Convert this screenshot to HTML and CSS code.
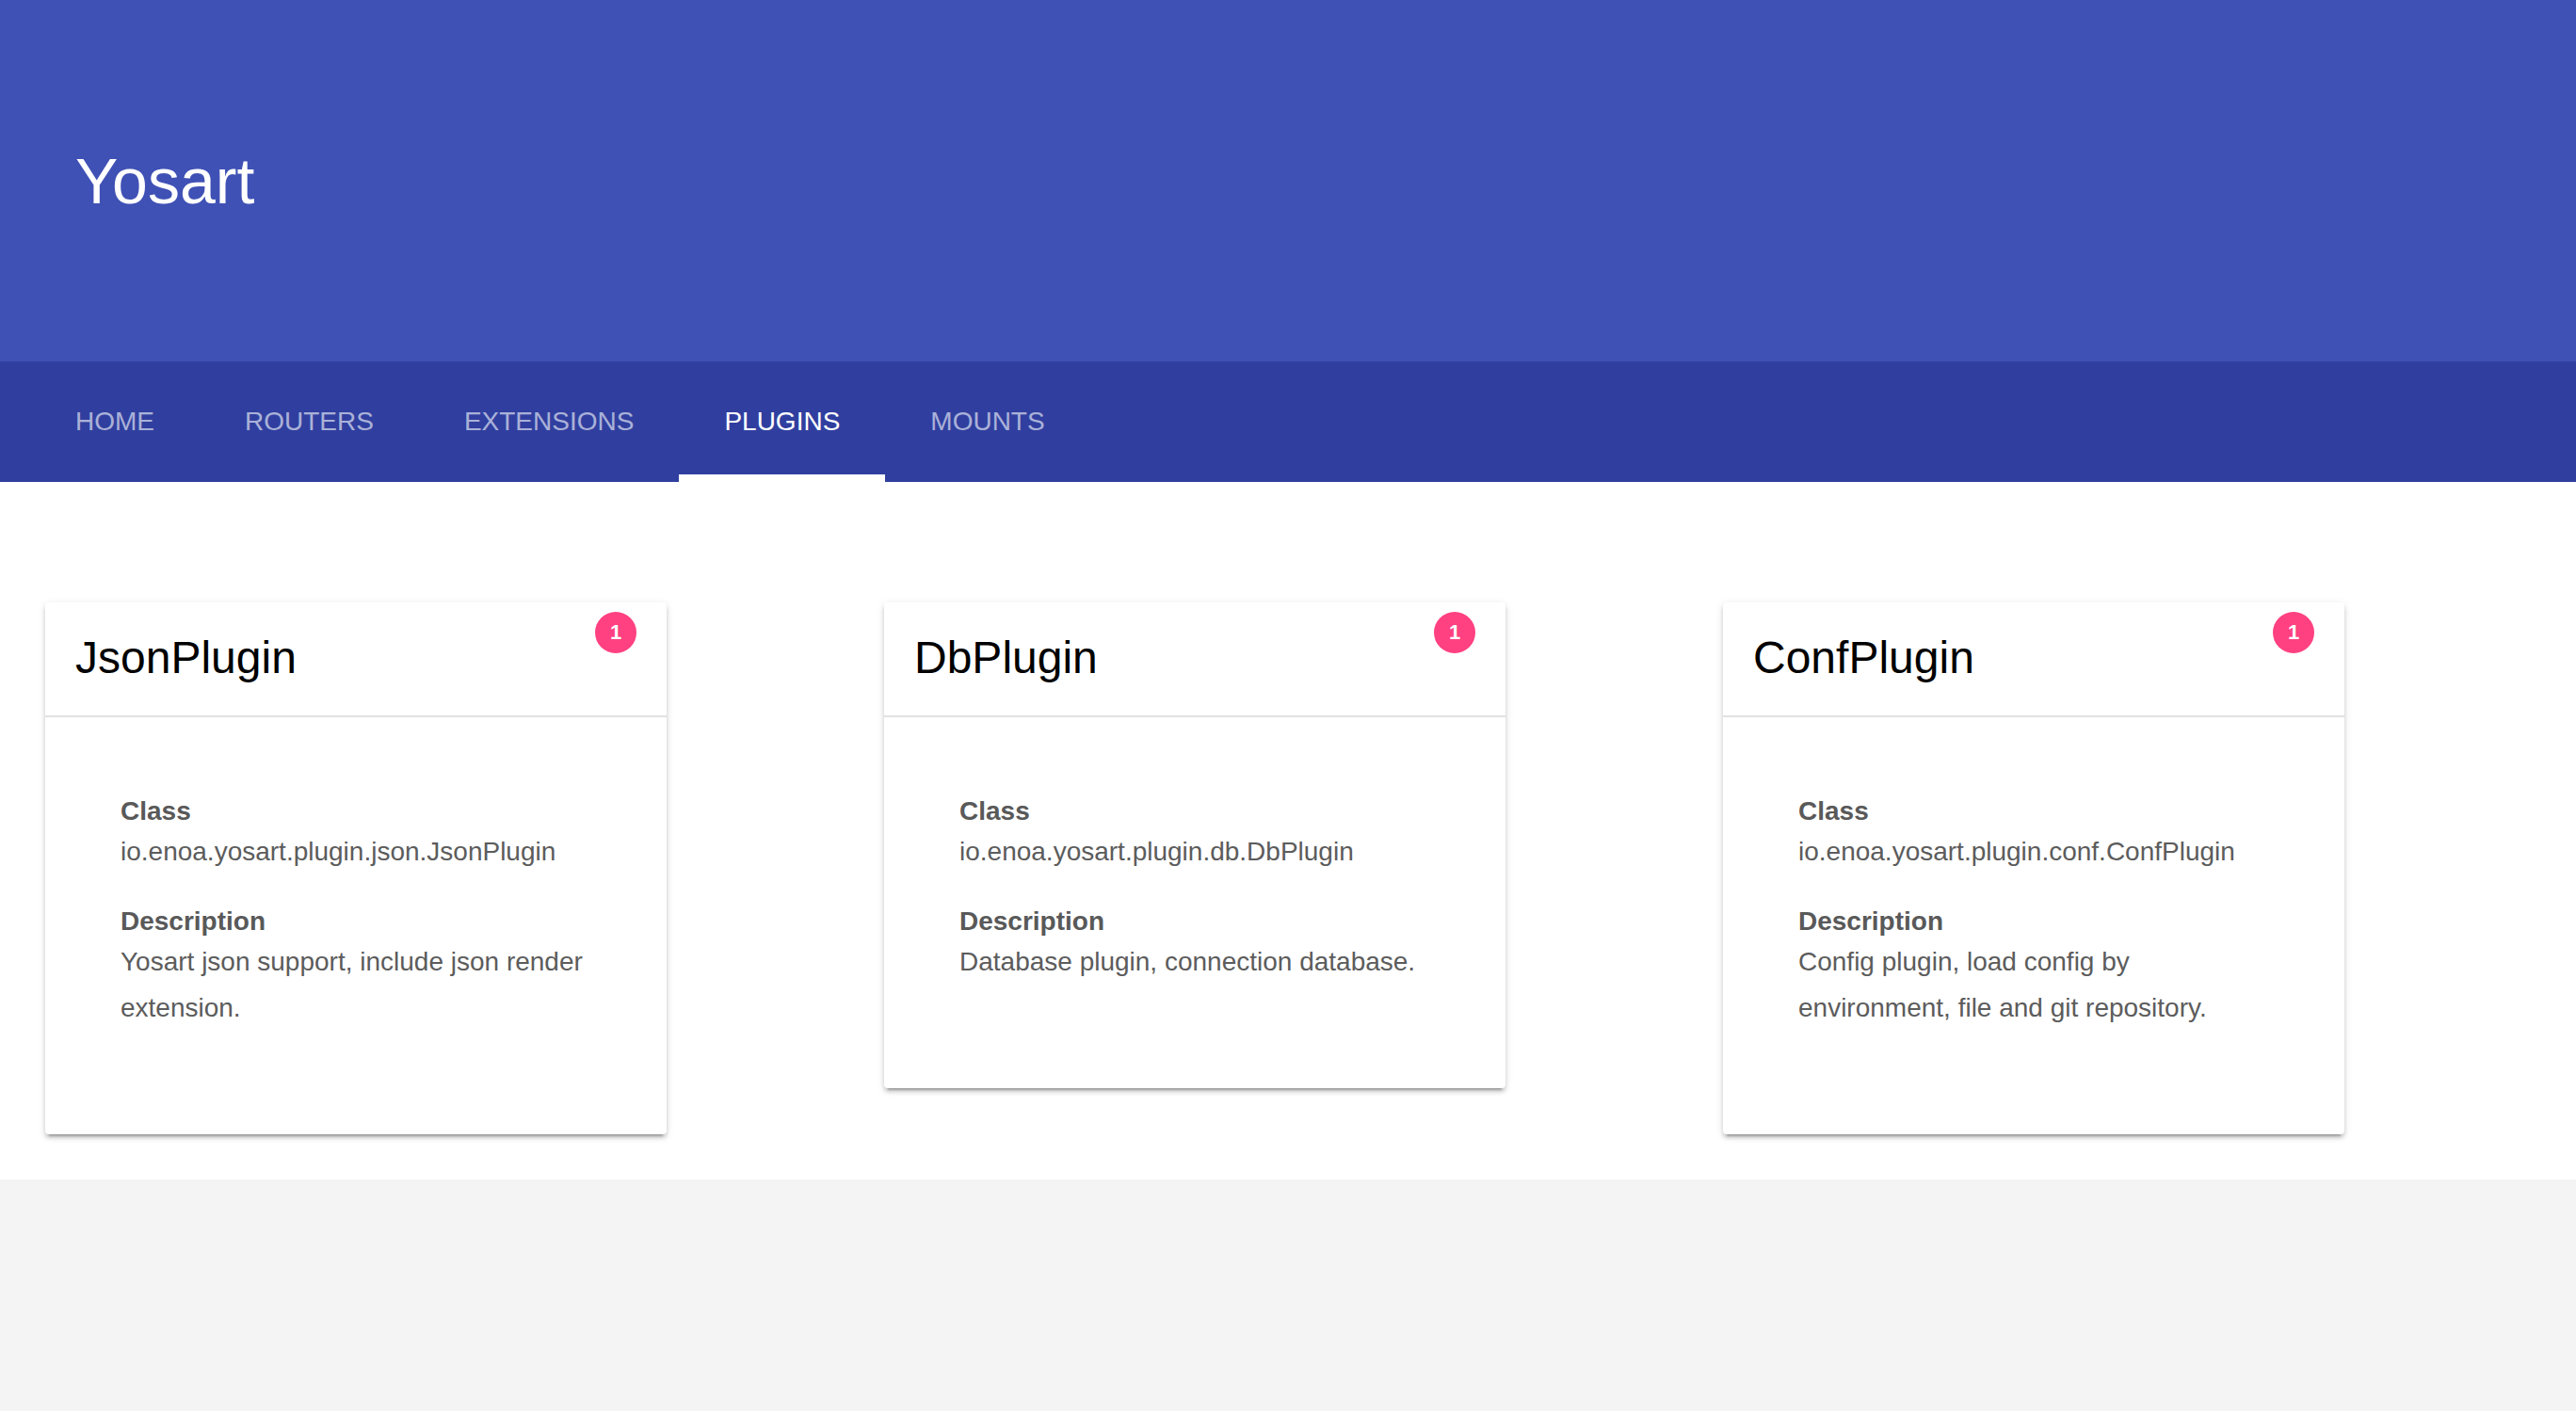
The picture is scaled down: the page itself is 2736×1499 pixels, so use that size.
FILE: index.html
```html
<!DOCTYPE html>
<html lang="en">
<head>
<meta charset="utf-8">
<title>Yosart</title>
<link rel="stylesheet" href="styles.css">
</head>
<body>
<header class="appbar">
  <div class="brand">Yosart</div>
</header>
<nav class="tabs">
  <a class="tab">HOME</a>
  <a class="tab">ROUTERS</a>
  <a class="tab">EXTENSIONS</a>
  <a class="tab active">PLUGINS</a>
  <a class="tab">MOUNTS</a>
</nav>
<main class="content">
  <section class="card">
    <div class="card-head">
      <h2 class="card-title">JsonPlugin</h2>
      <span class="badge">1</span>
    </div>
    <div class="card-body">
      <div class="field">
        <div class="label">Class</div>
        <div class="value">io.enoa.yosart.plugin.json.JsonPlugin</div>
      </div>
      <div class="field">
        <div class="label">Description</div>
        <div class="value">Yosart json support, include json render extension.</div>
      </div>
    </div>
  </section>
  <section class="card">
    <div class="card-head">
      <h2 class="card-title">DbPlugin</h2>
      <span class="badge">1</span>
    </div>
    <div class="card-body">
      <div class="field">
        <div class="label">Class</div>
        <div class="value">io.enoa.yosart.plugin.db.DbPlugin</div>
      </div>
      <div class="field">
        <div class="label">Description</div>
        <div class="value">Database plugin, connection database.</div>
      </div>
    </div>
  </section>
  <section class="card">
    <div class="card-head">
      <h2 class="card-title">ConfPlugin</h2>
      <span class="badge">1</span>
    </div>
    <div class="card-body">
      <div class="field">
        <div class="label">Class</div>
        <div class="value">io.enoa.yosart.plugin.conf.ConfPlugin</div>
      </div>
      <div class="field">
        <div class="label">Description</div>
        <div class="value">Config plugin, load config by environment, file and git repository.</div>
      </div>
    </div>
  </section>
</main>
</body>
</html>
```
FILE: styles.css
```css
html, body {
  margin: 0;
  padding: 0;
}
body {
  background: #f4f4f4;
  font-family: "Liberation Sans", Arial, sans-serif;
}
.appbar {
  height: 384px;
  background: #3f51b5;
  display: flex;
  align-items: center;
  padding-left: 80px;
}
.brand {
  color: #ffffff;
  font-size: 68px;
}
.tabs {
  height: 128px;
  background: #303f9f;
  display: flex;
  padding-left: 32px;
}
.tab {
  display: flex;
  align-items: center;
  padding: 0 48px;
  font-size: 28px;
  color: rgba(255, 255, 255, 0.6);
  box-sizing: border-box;
  border-bottom: 8px solid transparent;
  padding-top: 8px;
}
.tab.active {
  color: #ffffff;
  border-bottom-color: #ffffff;
}
.content {
  background: #ffffff;
  display: flex;
  align-items: flex-start;
  gap: 231px;
  padding: 128px 48px 48px 48px;
}
.card {
  position: relative;
  width: 660px;
  flex: none;
  background: #ffffff;
  border-radius: 4px;
  box-shadow: 0 4px 4px 0 rgba(0, 0, 0, 0.16), 0 6px 2px -4px rgba(0, 0, 0, 0.22), 0 2px 10px 0 rgba(0, 0, 0, 0.1);
}
.card-head {
  height: 122px;
  box-sizing: border-box;
  padding: 31px 32px 0 32px;
  border-bottom: 2px solid #e2e2e2;
}
.card-title {
  margin: 0;
  font-size: 48px;
  font-weight: normal;
  line-height: 56px;
  color: #000000;
}
.badge {
  position: absolute;
  top: 10px;
  right: 32px;
  width: 44px;
  height: 44px;
  border-radius: 50%;
  background: #ff4081;
  color: #ffffff;
  font-size: 22px;
  font-weight: bold;
  display: flex;
  align-items: center;
  justify-content: center;
}
.card-body {
  padding: 82px 80px 110px 80px;
  display: flex;
  flex-direction: column;
  gap: 32px;
}
.label {
  font-size: 28px;
  font-weight: bold;
  line-height: 36px;
  color: #595959;
}
.value {
  font-size: 28px;
  line-height: 49px;
  color: #5c5c5c;
}
```
